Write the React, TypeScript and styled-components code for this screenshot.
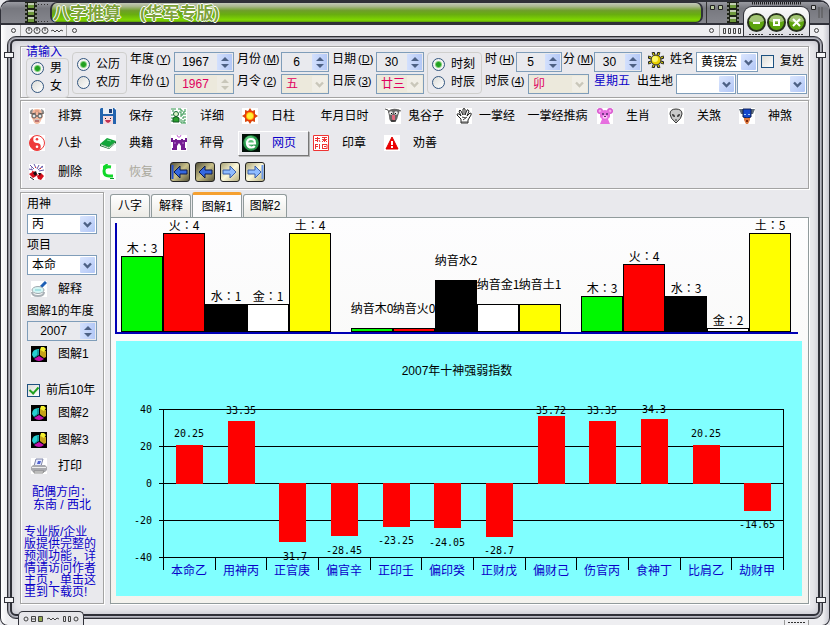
import React, { ReactNode } from "react";
import styled, { createGlobalStyle, css } from "styled-components";

const INK = "#2f3038";
const LINE = "#a3a3a3";
const BLUE = "#0a00c8";
const SANS = '"Liberation Sans", "Noto Sans CJK SC", sans-serif';
const MONO = '"DejaVu Sans Mono", "Noto Sans CJK SC", monospace';

const GlobalStyle = createGlobalStyle`
  * { box-sizing: border-box; }
  body { margin: 0; background: #e9e9ed; font: 12px/14px ${SANS}; color: #000; }
  button, input, select { font: inherit; color: inherit; margin: 0; padding: 0; }
  svg { display: block; flex: none; }
`;

/* ---------- window frame ---------- */

const Shell = styled.div`
  position: relative;
  display: flex;
  flex-direction: column;
  min-height: 100vh;
  background: linear-gradient(90deg, #fff, #eeeef1 6px, #eeeef1 calc(100% - 6px), #c8c8d0);
  border: 1px solid ${INK};
  border-top-width: 2px;
  border-radius: 10px 10px 8px 8px;
  overflow: hidden;
`;

const TitleBar = styled.header`
  display: flex;
  height: 23px;
  background: linear-gradient(#9a9ba2, #77787f 30%, #85868d);
  border-bottom: 2px solid ${INK};
`;

const TitleEdge = styled.div<{ $w: number }>`
  width: ${(p) => p.$w}px;
  flex: none;
`;

const Caption = styled.h1`
  flex: 1;
  margin: 0;
  padding-left: 1px;
  border: 1px solid ${INK};
  border-left-width: 2px;
  border-right-width: 2px;
  border-radius: 7px;
  background: linear-gradient(#c3c8ba, #a9b88c 18%, #6f9f2a 40%, #68ad10 60%, #80d800 90%, #5c9c10);
  color: #7fa33c;
  font: bold 17px/22px ${SANS};
  white-space: pre;
  text-shadow: -1px 0 #fff, 1px 0 #fff, 0 -1px #fff, 0 1px #fff;
`;

const Strip = styled.div`
  display: flex;
  align-items: center;
  justify-content: space-between;
  height: 11px;
  padding: 0 8px;
`;

const Island = styled.div`
  position: absolute;
  top: 4px;
  right: 19px;
  height: 30px;
  padding: 6px 3px 0;
  background: linear-gradient(#fafafa, #dcdce2);
  border: 1px solid ${INK};
  border-bottom: 0;
  border-radius: 9px 9px 0 0;
`;

const Orbs = styled.div`
  display: flex;
  gap: 1px;
`;

const RoundButton = styled.button`
  width: 19px;
  height: 19px;
  border: 0;
  background: none;
`;

const Frame = styled.main`
  flex: 1;
  display: flex;
  flex-direction: column;
  margin: 0 6px 6px;
  padding: 9px 13px 14px 12px;
  border: 1px solid ${INK};
  border-radius: 9px;
  background: #e9e9ed;
  box-shadow: inset 0 0 0 1px #8f9098, inset 0 0 0 2px #b9bac4, inset 0 0 0 4px ${INK},
    inset 0 0 6px 5px #c4c4cc;
`;

const Clip = styled.i<{ $right?: boolean; $bottom?: boolean }>`
  position: absolute;
  ${(p) => (p.$right ? "right: 3px;" : "left: 3px;")}
  ${(p) => (p.$bottom ? "bottom: 22px;" : "top: 50px;")}
  width: 10px;
  height: 6px;
  background: #f4f4f6;
  border: 1px solid ${INK};
`;

const FootTab = styled.div`
  position: absolute;
  left: 17px;
  bottom: 0;
  width: 66px;
  height: 14px;
  background: #e6e6ea;
  border: 1px solid ${INK};
  border-bottom: 0;
  border-radius: 5px 5px 0 0;
`;

const FootMark = styled.div`
  position: absolute;
  right: 20px;
  bottom: 0;
`;

/* ---------- shared controls ---------- */

const panel = css`
  border: 1px solid ${LINE};
  box-shadow: inset 1px 1px 0 #fff, 1px 1px 0 #fff;
`;

const Field = styled.div<{ $w?: number; $off?: boolean; $white?: boolean }>`
  display: grid;
  grid-template-columns: 1fr 17px;
  width: ${(p) => (p.$w ? p.$w + "px" : "auto")};
  height: 20px;
  flex: none;
  border: 1px solid #7f9db9;
  background: ${(p) => (p.$off ? "#ece9dc" : p.$white ? "#fff" : "#e9eaee")};
  color: ${(p) => (p.$off ? "#e00060" : "#000")};
`;

const NumberInput = styled.input`
  min-width: 0;
  width: 100%;
  border: 0;
  background: none;
  outline: 0;
  text-align: center;
`;

const SpinBox = styled.div`
  grid-column: 2;
  display: grid;
  grid-template-rows: 1fr 1fr;
  margin: 1px;
`;

const SpinButton = styled.button<{ $off?: boolean }>`
  display: grid;
  place-items: center;
  border: 0;
  background: ${(p) => (p.$off ? "#eeece4" : "linear-gradient(90deg, #d3e0fd, #b4c8f6)")};
  color: ${(p) => (p.$off ? "#c9c7ba" : "#4d6185")};
`;

const Select = styled.select`
  grid-area: 1 / 1 / 2 / 3;
  appearance: none;
  width: 100%;
  min-width: 0;
  padding: 0 16px 0 4px;
  border: 0;
  background: none;
  outline: 0;
  color: inherit;
  opacity: 1;
`;

const Arrow = styled.span<{ $off?: boolean }>`
  grid-area: 1 / 2;
  display: grid;
  place-items: center;
  margin: 1px;
  border-radius: 1px;
  pointer-events: none;
  background: ${(p) => (p.$off ? "#f0eee6" : "linear-gradient(135deg, #dbe6fe, #b1c6f6)")};
  color: ${(p) => (p.$off ? "#c9c7ba" : "#4d6185")};
`;

const Label = styled.label<{ $blue?: boolean }>`
  line-height: 14px;
  white-space: nowrap;
  color: ${(p) => (p.$blue ? BLUE : "#000")};
`;

const Mnemonic = styled.span`
  margin-left: 2px;
  font-size: 11px;
`;

const Choice = styled.label`
  display: flex;
  align-items: center;
  gap: 6px;
  height: 18px;
  white-space: nowrap;
`;

const Radio = styled.input`
  appearance: none;
  width: 13px;
  height: 13px;
  flex: none;
  border: 1px solid #33567f;
  border-radius: 50%;
  background: linear-gradient(135deg, #dcdcd7, #fff);
  &:checked {
    background: radial-gradient(circle, #23a021 0 2px, #7fcf7a 3px, #f4f4f2 4px);
  }
`;

const Check = styled.input`
  appearance: none;
  display: grid;
  place-items: center;
  width: 13px;
  height: 13px;
  flex: none;
  border: 1px solid #1c5180;
  background: linear-gradient(135deg, #dcdcd7, #fff);
  &:checked::after {
    content: "";
    width: 4px;
    height: 7px;
    margin-bottom: 2px;
    border: solid #21a121;
    border-width: 0 2px 2px 0;
    transform: rotate(42deg);
  }
`;

const Chevron = ({ up }: { up?: boolean }) => (
  <svg width="8" height="5" viewBox="0 0 8 5" aria-hidden="true">
    <path d={up ? "M0 5L4 1L8 5Z" : "M0 0L4 4L8 0Z"} fill="currentColor" />
  </svg>
);

const Spin = ({ id, value, w, off, name }: { id: string; value: string; w?: number; off?: boolean; name?: string }) => (
  <Field $w={w} $off={off}>
    <NumberInput id={id} aria-label={name} inputMode="numeric" defaultValue={value} disabled={off} />
    <SpinBox>
      <SpinButton type="button" aria-label="增加" $off={off} disabled={off}><Chevron up /></SpinButton>
      <SpinButton type="button" aria-label="减少" $off={off} disabled={off}><Chevron /></SpinButton>
    </SpinBox>
  </Field>
);

const Drop = ({ id, value, w, off, name }: { id: string; value?: string; w?: number; off?: boolean; name?: string }) => (
  <Field $w={w} $off={off} $white>
    <Select id={id} aria-label={name} disabled={off} defaultValue={value ?? ""}>
      <option>{value ?? ""}</option>
    </Select>
    <Arrow $off={off}>
      <svg width="9" height="7" viewBox="0 0 9 7" aria-hidden="true">
        <path d="M1 1.5L4.500 5L8 1.5" fill="none" stroke="currentColor" strokeWidth="2.4" />
      </svg>
    </Arrow>
  </Field>
);

/* ---------- birth form ---------- */

const FormPanel = styled.section`
  ${panel}
  display: flex;
  gap: 3px;
  height: 52px;
  padding: 0 2px 0 5px;
  margin-bottom: 2px;
`;

const Lead = styled.div`
  display: flex;
  flex-direction: column;
  width: 43px;
  flex: none;
  color: ${BLUE};
  line-height: 11px;
`;

const RadioBox = styled.div<{ $top?: boolean }>`
  width: ${(p) => (p.$top ? 55 : 43)}px;
  height: ${(p) => (p.$top ? 42 : 40)}px;
  flex: none;
  margin-top: ${(p) => (p.$top ? 5 : 0)}px;
  padding: ${(p) => (p.$top ? 2 : 0)}px 0 0 4px;
  border: 1px solid #cfcfcd;
  border-radius: 4px;
  color: #000;
`;

const Pair = styled.div<{ $w: number }>`
  display: grid;
  grid-template-columns: 43px ${(p) => p.$w}px;
  grid-template-rows: 20px 20px;
  row-gap: 2px;
  column-gap: 1px;
  margin-top: 5px;
  flex: none;
`;

const Lines = styled.div`
  margin-top: 5px;
  display: flex;
  flex-direction: column;
  gap: 2px;
`;

const Line = styled.div`
  display: flex;
  gap: 1px;
  height: 20px;
`;

const Slot = styled.div<{ $w: number }>`
  width: ${(p) => p.$w}px;
  flex: none;
  align-self: flex-start;
`;

const Key = ({ id, text, k }: { id: string; text: string; k: string }) => (
  <Label htmlFor={id}>{text}<Mnemonic>(<u>{k}</u>)</Mnemonic></Label>
);

/* ---------- tool bar ---------- */

const ToolPanel = styled.nav`
  ${panel}
  display: grid;
  grid-template-columns: repeat(11, minmax(0, 1fr));
  grid-template-rows: 28px 26px 32px;
  padding: 1px 2px 0 4px;
  height: 89px;
  margin-bottom: 3px;
`;

const Tool = styled.button<{ $raised?: boolean; $off?: boolean; $bare?: boolean }>`
  display: flex;
  align-items: center;
  align-self: center;
  height: 25px;
  padding-left: ${(p) => (p.$bare ? 0 : 3)}px;
  border: 1px solid transparent;
  background: none;
  white-space: nowrap;
  color: ${(p) => (p.$off ? "#aaa89c" : p.$raised ? BLUE : "#000")};
  ${(p) => p.$raised && css`border-color: #fff #777 #777 #fff; box-shadow: 1px 1px 0 #b5b5b5;`}
  & > span {
    flex: 1;
    text-align: center;
  }
`;

const ArrowSet = styled.div`
  grid-column: span 2;
  display: flex;
  align-items: center;
  gap: 5px;
  padding-left: 3px;
`;

const ArrowButton = styled.button<{ $lit?: boolean }>`
  display: grid;
  place-items: center;
  width: 20px;
  height: 20px;
  border: 1px solid #222;
  border-radius: 3px;
  background: ${(p) => (p.$lit ? "linear-gradient(135deg, #a9a376, #fdf9dc 50%, #b5ae80)" : "linear-gradient(135deg, #55523a, #c9c08a 50%, #5b573c)")};
`;

const RowBreak = styled.div<{ $n: number }>`
  grid-column: span ${(p) => p.$n};
`;

const I = ({ children, bg = "#fff", w = 16 }: { children: ReactNode; bg?: string; w?: number }) => (
  <svg width={w} height="16" viewBox="0 0 16 16" aria-hidden="true">
    <rect width="16" height="16" fill={bg} />
    {children}
  </svg>
);

const icons: Record<string, ReactNode> = {
  face: (
    <I>
      <path d="M3 5Q3 1 8 1T13 5L14 9L12 12Q11 16 8 16T4 12L2 9Z" fill="#f4b79c" />
      <path d="M1 6Q0 2 4 1L3 6ZM15 6Q16 2 12 1L13 6Z" fill="#8d8a88" />
      <path d="M6 3H10" stroke="#d08a6c" />
      <path d="M2 6L7 5M9 5L14 6" stroke="#5e5551" />
      <circle cx="5" cy="8" r="2" fill="#dfe9ea" stroke="#555" /><circle cx="11" cy="8" r="2" fill="#dfe9ea" stroke="#555" />
      <path d="M7 8H9" stroke="#555" />
      <path d="M5 12Q8 10 11 12L10 14H6Z" fill="#c9c5c2" /><path d="M6 13H10" stroke="#a22" />
    </I>
  ),
  disk: (
    <I>
      <path d="M1 0H14L16 2V16H0V1Z" fill="#2464ae" /><rect x="3" width="10" height="6" fill="#e8edf4" /><rect x="9" y="1" width="3" height="4" fill="#1d3f78" />
      <rect x="3" y="8" width="10" height="8" fill="#f5d9dc" /><path d="M5 10H6V11H5ZM10 10H11V11H10Z" fill="#111" /><path d="M5 12H11Q10 15 8 15T5 12Z" fill="#c23150" />
    </I>
  ),
  maze: (
    <I>
      <path d="M0 1H5M1 3H3M7 1H10V3H12M14 1V4H12M15 6H11V8M8 4H10V9M15 9H12V11M14 11V13H11M10 11V15H15M1 6V8M0 10H2M0 13H2M12 5H13M13 15V14" fill="none" stroke="#2d9248" />
      <circle cx="5" cy="6" r="2.500" fill="#dff2c8" stroke="#163" /><path d="M2 14V10Q5 7 8 10V14Z" fill="#2aa02c" stroke="#115522" />
    </I>
  ),
  sun: (
    <I>
      <path d="M8 0L10 3L13 2L13 6L16 8L13 10L13 14L10 13L8 16L6 13L3 14L3 10L0 8L3 6L3 2L6 3Z" fill="#d84a0c" />
      <circle cx="8" cy="8" r="5" fill="#f2300c" /><circle cx="8" cy="8" r="4" fill="#ffb000" /><circle cx="8" cy="8" r="3" fill="#ffee38" />
    </I>
  ),
  ghost: (
    <I w={18}>
      <path d="M0 1L3 2L4 5M16 3L13 2L12 5" stroke="#555" fill="none" /><path d="M3 3Q8 -1 15 2L13 8Q12 14 8 14T4 8Z" fill="#666" />
      <circle cx="6" cy="5" r="1.800" fill="#eee" /><circle cx="11" cy="5" r="1.800" fill="#eee" /><path d="M6 5H7V6H6ZM10 5H11V6H10Z" /><path d="M7 7H10V12Q8 13 7 11Z" fill="#e0667c" /><path d="M6 13H11" stroke="#111" />
    </I>
  ),
  hand: (
    <I w={18}>
      <path d="M5 15V11L1 7Q1 5 3 6L5 8L3 3Q4 1 5 3L7 7V1Q8 0 9 1V7L11 2Q12 1 13 3L11 8L14 5Q16 5 15 7L12 12V15Z" fill="#fff" stroke="#222" />
      <path d="M6 9L10 10M7 12L11 9M5 14H12" stroke="#444" fill="none" />
    </I>
  ),
  bear: (
    <I>
      <circle cx="3" cy="3" r="3" fill="#d957d0" /><circle cx="13" cy="3" r="3" fill="#d957d0" /><circle cx="3" cy="3" r="1.500" fill="#f7a8ee" /><circle cx="13" cy="3" r="1.500" fill="#f7a8ee" />
      <path d="M3 4Q8 0 13 4V9L11 11L13 16H3L5 11L3 9Z" fill="#e66fdf" /><path d="M5 5H7V7H5ZM9 5H11V7H9Z" fill="#7a3c8c" /><ellipse cx="8" cy="9" rx="2.500" ry="1.800" fill="#fbc4f6" /><path d="M7 8H9V9H7Z" fill="#702070" />
    </I>
  ),
  alien: (
    <I>
      <path d="M2 6Q2 1 8 1T14 6Q14 10 8 15Q2 10 2 6Z" fill="#c9c9c9" stroke="#333" /><path d="M4 6Q7 6 7 9Q4 9 4 6ZM12 6Q9 6 9 9Q12 9 12 6Z" fill="#333" /><path d="M7 12H9" stroke="#333" />
    </I>
  ),
  mask: (
    <I>
      <path d="M0 1H4V6H2ZM16 1H12V6H14Z" fill="#5d6b78" /><path d="M4 1H12V9Q8 11 4 9Z" fill="#1548cc" stroke="#0b1a50" /><path d="M5 6H7V7H5ZM9 6H11V7H9Z" fill="#9fd0ff" /><path d="M5 10H11V12L9 16H7L5 12Z" fill="#dd7a40" /><path d="M7 12H9V14H7Z" fill="#7c260c" />
    </I>
  ),
  yin: (
    <I>
      <circle cx="8" cy="8" r="7.500" fill="#fff" stroke="#ee3a3a" /><path d="M8 0.500A7.500 7.500 0 0 0 8 15.500A3.750 3.750 0 0 0 8 8A3.750 3.750 0 0 1 8 0.500Z" fill="#ee3a3a" />
      <circle cx="8" cy="4.200" r="1.300" fill="#ee3a3a" /><circle cx="8" cy="11.800" r="1.300" fill="#fff" />
    </I>
  ),
  book: (
    <I>
      <path d="M0 9L7 3L16 6L9 12Z" fill="#13a63a" /><path d="M0 9L9 12V14L0 11ZM9 12L16 6V8L9 14Z" fill="#0a6422" /><path d="M1 10L9 13L15 8" fill="none" stroke="#d8f0dc" /><path d="M7 5L11 6" stroke="#7be095" />
    </I>
  ),
  arch: (
    <I>
      <path d="M0 3H2V5H4V4H6V5H10V4H12V5H14V3H16V7H14V13H15V15H10V11L8 8L6 11V15H1V13H2V7H0Z" fill="#741c92" /><path d="M6 0L7 2H9L10 0" stroke="#c86ad8" fill="none" /><path d="M3 7H5V9H3ZM11 7H13V9H11Z" fill="#9a4fb4" />
    </I>
  ),
  web: (
    <svg width="18" height="18" viewBox="0 0 18 18" aria-hidden="true">
      <rect width="18" height="18" fill="#021108" /><circle cx="9" cy="9" r="7.800" fill="#28994b" /><circle cx="8" cy="7" r="5" fill="#5cc47a" />
      <path d="M5 9.500H13Q13 5 9 5T5 9.500Q5.500 13.500 9.500 13.500Q11.500 13.500 12.800 12" fill="none" stroke="#fff" strokeWidth="2.200" />
    </svg>
  ),
  seal: (
    <I>
      <path d="M0.500 0.500H15.500V15.500H0.500Z" fill="none" stroke="#e33" />
      <path d="M2 3.500H7M4.500 2V7M2 5.500H4M6 5L7 7M9 2.500H14M9 4.500H14M11.500 2V7M9 7L11 5M14 7L12 5M2.500 9V14M2 9.500H5M2 11.500H5M6.500 9V14M9.500 9V14M9 9.500H14V14M9 13.500H14M11 11.500H13" fill="none" stroke="#e33" />
    </I>
  ),
  warn: (
    <I>
      <path d="M8 2L14 14H2Z" fill="#f00000" stroke="#d00" strokeLinejoin="round" /><path d="M7 6H9V10H7ZM7 11H9V13H7Z" fill="#fff" />
    </I>
  ),
  blast: (
    <I>
      <path d="M1 1L5 5M5 0L7 4M10 1L8 5M14 2L9 6M0 5L4 6M15 6L10 7M2 4H3M12 3H14" stroke="#6658a8" /><path d="M6 3H7V4H6ZM11 4H12V5H11ZM3 7H4V8H3Z" fill="#e8332c" />
      <path d="M0 10L5 7L9 11L4 14Z" fill="#d6101c" /><path d="M8 12L12 9L15 12L12 16L9 15Z" fill="#d6101c" /><path d="M4 9L7 7L8 10L6 12ZM9 9L12 9L11 12Z" fill="#111" /><path d="M1 13L5 16" stroke="#222" />
    </I>
  ),
  undo: (
    <I>
      <path d="M11 3Q4 2 4 7T9 12H13" fill="none" stroke="#12d82a" strokeWidth="3" /><path d="M3 8V2L6 0H8L7 4Z" fill="#12d82a" /><path d="M10 14.500H14" stroke="#0b9d28" />
    </I>
  ),
  lens: (
    <I>
      <path d="M10 6L15 1" stroke="#1d5fb4" strokeWidth="3" /><ellipse cx="7" cy="9" rx="6" ry="3.500" fill="#d4f5f4" stroke="#a0a8ae" /><path d="M1 11Q1 15 7 15T13 11" fill="none" stroke="#a9b0b6" strokeWidth="2" /><path d="M4 9H10" stroke="#78cfd4" />
    </I>
  ),
  pie: (
    <I bg="#000">
      <path d="M8 3Q1 3 1 9L3 12L8 9Z" fill="#25cfd0" /><path d="M3 13L8 10L13 13Q8 17 3 13Z" fill="#c212ad" /><path d="M9 4L15 5V11L13 12L9 9Z" fill="#c5a219" /><path d="M9 4L10 1H13L15 3L13 6Z" fill="#f4f02e" /><path d="M7 4V9L3 12" stroke="#0a6c77" fill="none" />
    </I>
  ),
  printer: (
    <I>
      <path d="M5 1H12L10 8H3Z" fill="#e6ebff" stroke="#8086a8" /><path d="M7 3H10L9 6H6Z" fill="#5364cf" /><path d="M2 7H14L16 9V12L14 14H2L0 12V9Z" fill="#a9aaaf" /><path d="M1 9.500H15" stroke="#eee" /><path d="M3 13H13L12 15H3Z" fill="#eee" stroke="#888" />
    </I>
  ),
};

const Sunny = () => (
  <svg width="16" height="16" viewBox="0 0 16 16" aria-hidden="true">
    <path d="M5 0L6 3M11 0L10 3M0 5L3 6M16 5L13 6M0 11L3 10M16 11L13 10M5 16L6 13M11 16L10 13" stroke="#222" strokeWidth="3" />
    <path d="M5 1L6 3M11 1L10 3M1 5L3 6M15 5L13 6M1 11L3 10M15 11L13 10M5 15L6 13M11 15L10 13" stroke="#f4e600" />
    <circle cx="8" cy="8" r="5" fill="#e8d000" stroke="#222" /><circle cx="7" cy="7" r="3" fill="#fdf86a" />
  </svg>
);

const ToolItem = ({ icon, text, raised, off }: { icon?: string; text: string; raised?: boolean; off?: boolean }) => (
  <Tool type="button" $raised={raised} $off={off} $bare={!icon} disabled={off}>
    {icon && icons[icon]}
    <span>{text}</span>
  </Tool>
);

const Nav = ({ left, bar, lit, name }: { left?: boolean; bar?: boolean; lit?: boolean; name: string }) => (
  <ArrowButton type="button" $lit={lit} aria-label={name}>
    <svg width="18" height="16" viewBox="0 0 18 16" aria-hidden="true">
      <path
        d={left ? "M3 8L9 2V6H16V10H9V14Z" : "M15 8L9 2V6H2V10H9V14Z"}
        fill={lit ? "#8fbcff" : "#3468e0"}
        stroke={lit ? "#3b5ea8" : "#0d1a4c"}
      />
      {bar && <path d={left ? "M1.500 1V15" : "M16.500 1V15"} stroke={lit ? "#6b98ea" : "#234fd0"} strokeWidth="2" />}
    </svg>
  </ArrowButton>
);

/* ---------- lower area ---------- */

const Body = styled.div`
  flex: 1;
  display: flex;
  gap: 6px;
`;

const Side = styled.aside`
  ${panel}
  display: flex;
  flex-direction: column;
  width: 84px;
  flex: none;
  padding: 3px 6px 0;
`;

const SideLabel = styled(Label)`
  height: 18px;
  line-height: 16px;
`;

const SideButton = styled.button<{ $h: number }>`
  display: flex;
  align-items: center;
  flex: none;
  height: ${(p) => p.$h}px;
  padding-left: 4px;
  gap: 11px;
  border: 0;
  background: none;
`;

const SideGap = styled.div<{ $h: number }>`
  height: ${(p) => p.$h}px;
`;

const Direction = styled.p`
  margin: 7px 0 14px;
  text-align: center;
  line-height: 13px;
  color: ${BLUE};
  white-space: nowrap;
`;

const MoreLink = styled.a`
  margin: 0 -3px;
  line-height: 12px;
  color: ${BLUE};
  text-decoration: none;
  white-space: nowrap;
`;

const Main = styled.section`
  flex: 1;
  min-width: 0;
  display: flex;
  flex-direction: column;
`;

const Tabs = styled.div`
  display: flex;
  align-items: flex-end;
  height: 25px;
  gap: 1px;
`;

const Tab = styled.button<{ $on?: boolean; $wide?: boolean }>`
  width: ${(p) => (p.$on ? 50 : p.$wide ? 44 : 40)}px;
  height: ${(p) => (p.$on ? 26 : 23)}px;
  margin-bottom: ${(p) => (p.$on ? -1 : 0)}px;
  flex: none;
  border: 1px solid #919b9c;
  border-bottom: 0;
  border-top: ${(p) => (p.$on ? "3px solid #f5a030" : "1px solid #919b9c")};
  border-radius: 3px 3px 0 0;
  background: ${(p) => (p.$on ? "#fcfcfe" : "linear-gradient(#fff, #ecebe6)")};
`;

const Page = styled.div`
  flex: 1;
  padding: 0 6px 7px 4px;
  border: 1px solid #919b9c;
  background: linear-gradient(#fdfdfe, #f4f3ee);
  box-shadow: 1px 1px 0 #fff;
  & > svg {
    width: 100%;
    height: auto;
    overflow: visible;
  }
  & > svg + svg {
    margin-top: 7px;
  }
`;

const ElementText = styled.text`
  font: 12px "Noto Sans CJK TC", sans-serif;
  text-anchor: middle;
`;

const ChartText = styled.text<{ $blue?: boolean }>`
  font: 12px ${SANS};
  text-anchor: middle;
  fill: ${(p) => (p.$blue ? BLUE : "#000")};
`;

const ValueText = styled.text<{ $end?: boolean }>`
  font: 10px ${MONO};
  text-anchor: ${(p) => (p.$end ? "end" : "middle")};
`;

type Element = [x: number, top: number, fill: string, label: string, labelY: number];

const GREEN = "#00f800";
const RED = "#fe0000";
const YELLOW = "#ffff00";

const elements: Element[] = [
  [6, 38, GREEN, "木：3", 35], [48, 15, RED, "火：4", 12], [90, 86, "#000", "水：1", 83],
  [132, 86, "#fff", "金：1", 83], [174, 15, YELLOW, "土：4", 12],
  [236, 110, GREEN, "纳音木0", 95], [278, 110, RED, "纳音火0", 95], [320, 62, "#000", "纳音水2", 47],
  [362, 86, "#fff", "纳音金1", 71], [404, 86, YELLOW, "纳音土1", 71],
  [466, 78, GREEN, "木：3", 75], [508, 46, RED, "火：4", 43], [550, 78, "#000", "水：3", 75],
  [592, 110, "#fff", "金：2", 107], [634, 15, YELLOW, "土：5", 12],
];

const ElementChart = () => (
  <svg viewBox="0 0 687 116" role="img" aria-label="五行">
    <path d="M1 5V115H683" fill="none" stroke="#0000b4" strokeWidth="2" />
    {elements.map(([x, top, fill], i) => (
      <rect key={i} x={x + 0.5} y={top + 0.5} width="41" height={113 - top} fill={fill} stroke="#000" />
    ))}
    {elements.map(([x, , , label, y], i) => (
      <ElementText key={i} x={x + 21} y={y}>{label}</ElementText>
    ))}
  </svg>
);

type Index = [name: string, value: number, labelY: number];

const indexes: Index[] = [
  ["本命乙", 20.25, 96], ["用神丙", 33.35, 73], ["正官庚", -31.7, 219], ["偏官辛", -28.45, 213],
  ["正印壬", -23.25, 203], ["偏印癸", -24.05, 205], ["正财戊", -28.7, 213], ["偏财己", 35.72, 73],
  ["伤官丙", 33.35, 73], ["食神丁", 34.3, 72], ["比肩乙", 20.25, 96], ["劫财甲", -14.65, 187],
];

const center = (i: number) => Math.round(48 + (i + 0.5) * 51.67);

const IndexChart = () => (
  <svg viewBox="0 0 687 255" role="img" aria-label="2007年十神强弱指数">
    <rect x="1" width="686" height="255" fill="#80ffff" />
    <ChartText x="342" y="34">2007年十神强弱指数</ChartText>
    {indexes.map(([name, v, y], i) => (
      <g key={i}>
        <ValueText x={center(i)} y={y}>{v}</ValueText>
        <ChartText $blue x={center(i)} y="234">{name}</ChartText>
      </g>
    ))}
    {[40, 20, 0, -20, -40].map((v, i) => (
      <g key={v}>
        <ValueText $end x="37" y={72 + i * 37}>{v}</ValueText>
        <path d={`M44 ${68.5 + i * 37}H669`} stroke="#000" />
      </g>
    ))}
    <path d="M48.500 68V229M668.500 68V229" stroke="#000" />
    {indexes.slice(1).map((_, i) => (
      <path key={i} d={`M${Math.round(48 + (i + 1) * 51.67) + 0.5} 216V229`} stroke="#000" />
    ))}
    {indexes.map(([, v], i) => {
      const h = Math.ceil(Math.abs(v) * 1.85);
      return <rect key={i} x={center(i) - 13} y={v > 0 ? 142 - h : 142} width="27" height={v > 0 ? h + 1 : h} fill={RED} />;
    })}
  </svg>
);

const Film = () => (
  <svg width="12" height="21" viewBox="0 0 12 21" aria-hidden="true">
    <rect width="12" height="21" fill="#1d2216" />
    <path d="M3 1H9V6H3ZM3 8H9V13H3ZM3 15H9V20H3Z" fill="#6f9a3c" />
    <path d="M3 1H9V3H3ZM3 8H9V10H3ZM3 15H9V17H3Z" fill="#c3cfb2" />
    <path d="M1 1V21M11 1V21" stroke="#ddd" strokeDasharray="2 2" />
  </svg>
);

const Orb = ({ d }: { d: string }) => (
  <svg width="19" height="19" viewBox="0 0 19 19" aria-hidden="true">
    <circle cx="9.500" cy="9.500" r="8.500" fill="#5da40e" stroke="#26301c" strokeWidth="2" />
    <path d="M2 8Q3 2 9.500 2T17 8Q9 11 2 8Z" fill="#a3c576" />
    <path d={d} fill="none" stroke="#fff" strokeWidth="2" />
  </svg>
);

const row1: [string | undefined, string][] = [
  ["face", "排算"], ["disk", "保存"], ["maze", "详细"], ["sun", "日柱"], [undefined, "年月日时"], ["ghost", "鬼谷子"],
  ["hand", "一掌经"], [undefined, "一掌经推病"], ["bear", "生肖"], ["alien", "关煞"], ["mask", "神煞"],
];

export default function App() {
  return (
    <>
      <GlobalStyle />
      <Shell>
        <TitleBar>
          <TitleEdge $w={24} />
          <Film />
          <TitleEdge $w={13}>
            <svg width="13" height="21" viewBox="0 0 13 21" aria-hidden="true">
              <path d="M1 2.500H12M1 19.500H12" stroke="#333" strokeDasharray="1 2" />
            </svg>
          </TitleEdge>
          <Caption>八字推算    (华军专版)</Caption>
          <TitleEdge $w={24}>
            <svg width="24" height="21" viewBox="0 0 24 21" aria-hidden="true">
              <path d="M3.500 0V21" stroke="#333" /><path d="M7.500 3.500H11.500V7.500H7.500ZM15.500 3.500H19.500V7.500H15.500Z" fill="#b8c79c" stroke="#222" />
            </svg>
          </TitleEdge>
          <Film />
          <TitleEdge $w={90}>
            <svg width="90" height="21" viewBox="0 0 90 21" aria-hidden="true">
              <path d="M13 1H62" stroke="#222" strokeWidth="3" strokeDasharray="1 1" />
              <path d="M72.500 3.500H76.500V7.500H72.500Z" fill="#ccc" stroke="#222" /><path d="M80 5V16M83 5V16" stroke="#555" />
            </svg>
          </TitleEdge>
        </TitleBar>
        <Strip>
          <svg width="72" height="11" viewBox="0 0 72 11" aria-hidden="true">
            <g fill="none" stroke="#444">
              <circle cx="4.500" cy="5.500" r="2" /><circle cx="65.500" cy="5.500" r="2" />
              <circle cx="20" cy="5.500" r="3" /><circle cx="28" cy="5.500" r="3" /><circle cx="36" cy="5.500" r="3" />
              <path d="M20 3V6M28 3V6M36 3V6M42 6L44 5L46 7L48 5L50 7L52 5L54 6" /><path d="M11.500 0V11M57.500 0V11" stroke="#aaa" />
            </g>
          </svg>
          <svg width="114" height="11" viewBox="0 0 114 11" aria-hidden="true">
            <g fill="none" stroke="#444">
              <circle cx="4.500" cy="5.500" r="2" /><circle cx="109.500" cy="5.500" r="2" />
              <path d="M12.500 0V11" stroke="#aaa" />
              <path d="M16.500 3.500H18.500V8.500H16.500ZM21.500 3.500H23.500V8.500H21.500ZM26.500 3.500H28.500V8.500H26.500ZM31.500 3.500H33.500V8.500H31.500Z" />
            </g>
          </svg>
        </Strip>
        <Frame>
          <FormPanel aria-label="请输入">
            <Lead>
              请输入
              <RadioBox>
                <Choice><Radio type="radio" name="sex" defaultChecked />男</Choice>
                <Choice><Radio type="radio" name="sex" />女</Choice>
              </RadioBox>
            </Lead>
            <RadioBox $top>
              <Choice><Radio type="radio" name="calendar" defaultChecked />公历</Choice>
              <Choice><Radio type="radio" name="calendar" />农历</Choice>
            </RadioBox>
            <Pair $w={60}>
              <Key id="year" text="年度" k="Y" /><Spin id="year" value="1967" />
              <Key id="lyear" text="年份" k="1" /><Spin id="lyear" value="1967" off />
            </Pair>
            <Pair $w={48}>
              <Key id="month" text="月份" k="M" /><Spin id="month" value="6" />
              <Key id="lmonth" text="月令" k="2" /><Drop id="lmonth" value="五" off />
            </Pair>
            <Pair $w={48}>
              <Key id="day" text="日期" k="D" /><Spin id="day" value="30" />
              <Key id="lday" text="日辰" k="3" /><Drop id="lday" value="廿三" off />
            </Pair>
            <RadioBox $top>
              <Choice><Radio type="radio" name="clock" defaultChecked />时刻</Choice>
              <Choice><Radio type="radio" name="clock" />时辰</Choice>
            </RadioBox>
            <Lines>
              <Line>
                <Slot $w={30}><Key id="hour" text="时" k="H" /></Slot><Spin id="hour" value="5" w={46} />
                <Slot $w={30}><Key id="minute" text="分" k="M" /></Slot><Spin id="minute" value="30" w={48} />
                <Slot $w={4} /><Slot $w={21}><Sunny /></Slot>
                <Slot $w={25}><Label htmlFor="surname">姓名</Label></Slot><Drop id="surname" value="黄镜宏" w={62} />
                <Slot $w={1} />
                <Choice><Check type="checkbox" />复姓</Choice>
              </Line>
              <Line>
                <Slot $w={42}><Key id="lhour" text="时辰" k="4" /></Slot><Drop id="lhour" value="卯" w={61} off />
                <Slot $w={3} /><Slot $w={42}><Label as="span" $blue>星期五</Label></Slot>
                <Slot $w={38}><Label htmlFor="province">出生地</Label></Slot><Drop id="province" w={60} />
                <Drop id="city" name="城市" w={70} />
              </Line>
            </Lines>
          </FormPanel>

          <ToolPanel>
            {row1.map(([icon, text]) => <ToolItem key={text} icon={icon} text={text} />)}
            <ToolItem icon="yin" text="八卦" />
            <ToolItem icon="book" text="典籍" />
            <ToolItem icon="arch" text="秤骨" />
            <ToolItem icon="web" text="网页" raised />
            <ToolItem icon="seal" text="印章" />
            <ToolItem icon="warn" text="劝善" />
            <RowBreak $n={5} />
            <ToolItem icon="blast" text="删除" />
            <ToolItem icon="undo" text="恢复" off />
            <ArrowSet>
              <Nav left bar name="最前" /><Nav left name="向前" /><Nav lit name="向后" /><Nav lit bar name="最后" />
            </ArrowSet>
          </ToolPanel>

          <Body>
            <Side>
              <SideLabel htmlFor="god">用神</SideLabel>
              <Drop id="god" value="丙" />
              <SideGap $h={3} />
              <SideLabel htmlFor="item">项目</SideLabel>
              <Drop id="item" value="本命" />
              <SideButton type="button" $h={28}>{icons.lens}解释</SideButton>
              <SideLabel htmlFor="chartYear">图解1的年度</SideLabel>
              <Spin id="chartYear" value="2007" />
              <SideButton type="button" $h={26}>{icons.pie}图解1</SideButton>
              <SideGap $h={14} />
              <Choice><Check type="checkbox" defaultChecked />前后10年</Choice>
              <SideButton type="button" $h={28}>{icons.pie}图解2</SideButton>
              <SideButton type="button" $h={26}>{icons.pie}图解3</SideButton>
              <SideButton type="button" $h={26}>{icons.printer}打印</SideButton>
              <Direction>配偶方向：<br />东南 / 西北</Direction>
              <MoreLink href="#more">专业版/企业<br />版提供完整的<br />预测功能，详<br />情请访问作者<br />主页，单击这<br />里到下载页!</MoreLink>
            </Side>
            <Main>
              <Tabs role="tablist">
                <Tab type="button" role="tab">八字</Tab>
                <Tab type="button" role="tab">解释</Tab>
                <Tab type="button" role="tab" aria-selected $on>图解1</Tab>
                <Tab type="button" role="tab" $wide>图解2</Tab>
              </Tabs>
              <Page role="tabpanel">
                <ElementChart />
                <IndexChart />
              </Page>
            </Main>
          </Body>
        </Frame>
        <Island>
          <Orbs>
            <RoundButton type="button" aria-label="最小化"><Orb d="M6 10H13" /></RoundButton>
            <RoundButton type="button" aria-label="最大化"><Orb d="M7 7H12V12H7Z" /></RoundButton>
            <RoundButton type="button" aria-label="关闭"><Orb d="M6 6L13 13M13 6L6 13" /></RoundButton>
          </Orbs>
          <svg width="59" height="4" viewBox="0 0 59 4" aria-hidden="true">
            <path d="M2 2.500H17M22 2.500H37M42 2.500H57" stroke="#333" strokeDasharray="2 1" />
          </svg>
        </Island>
        <Clip /><Clip $right /><Clip $bottom /><Clip $right $bottom />
        <FootTab>
          <svg width="64" height="13" viewBox="0 0 64 13" aria-hidden="true">
            <g fill="none" stroke="#444">
              <circle cx="7" cy="7" r="2" /><circle cx="57" cy="7" r="2" />
              <path d="M12.500 4.500H16.500V9.500H12.500ZM12 7H17M44.500 4.500H46.500V9.500H44.500ZM49.500 4.500H51.500V9.500H49.500Z" />
              <path d="M19.500 4.500H23.500V9.500H19.500Z" fill="#93a84e" /><path d="M28 7L30 6L32 8L34 6L36 8L38 6L40 7" />
            </g>
          </svg>
        </FootTab>
        <FootMark>
          <svg width="25" height="5" viewBox="0 0 25 5" aria-hidden="true">
            <path d="M0.500 0V5M24.500 0V5" stroke="#999" /><path d="M4 2.500H21" stroke="#333" strokeDasharray="2 1" />
          </svg>
        </FootMark>
      </Shell>
    </>
  );
}
